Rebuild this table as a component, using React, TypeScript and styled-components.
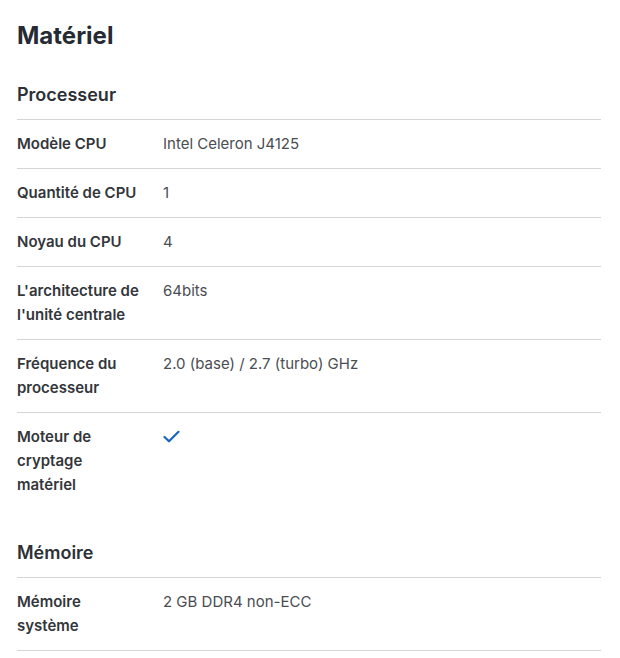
import React from "react";
import styled, { createGlobalStyle } from "styled-components";

const Global = createGlobalStyle`
  html, body { margin: 0; padding: 0; background: #fff; }
  body { font-family: Inter, "Noto Sans", "Liberation Sans", sans-serif; -webkit-font-smoothing: antialiased; }
`;

const Page = styled.div`
  padding: 20px 19px 0 17px;
  width: 584px;
`;

const Title = styled.h1`
  margin: 0 0 31px;
  font-size: 24px;
  line-height: 32px;
  font-weight: 700;
  color: #262b33;
`;

const Section = styled.section`
  & + & { margin-top: 32px; }
`;

const SectionTitle = styled.h2`
  margin: 0;
  padding-bottom: 12px;
  font-size: 18px;
  line-height: 24px;
  font-weight: 600;
  color: #2d3136;
  border-bottom: 1px solid #d4d4d4;
`;

const Row = styled.div<{ $last?: boolean }>`
  display: grid;
  grid-template-columns: 146px 1fr;
  padding: 12px 0;
  border-bottom: ${(p) => (p.$last ? "none" : "1px solid #d4d4d4")};
  font-size: 15px;
  line-height: 24px;
`;

const Label = styled.div`
  font-weight: 600;
  color: #33363a;
  padding-right: 23px;
`;

const Value = styled.div`
  color: #4a4d52;
  font-weight: 400;
`;

const Check = () => (
  <svg width="17" height="14" viewBox="0 0 17 14" style={{ marginTop: 5 }}>
    <path d="M1.5 7 L6 11.3 L15.5 1.8" fill="none" stroke="#1764c4" strokeWidth="2.2" strokeLinecap="round" strokeLinejoin="round" />
  </svg>
);

export default function App() {
  return (
    <Page>
      <Global />
      <Title>Matériel</Title>
      <Section>
        <SectionTitle>Processeur</SectionTitle>
        <Row>
          <Label>Modèle CPU</Label>
          <Value>Intel Celeron J4125</Value>
        </Row>
        <Row>
          <Label>Quantité de CPU</Label>
          <Value>1</Value>
        </Row>
        <Row>
          <Label>Noyau du CPU</Label>
          <Value>4</Value>
        </Row>
        <Row>
          <Label>L'architecture de l'unité centrale</Label>
          <Value>64bits</Value>
        </Row>
        <Row>
          <Label>Fréquence du processeur</Label>
          <Value>2.0 (base) / 2.7 (turbo) GHz</Value>
        </Row>
        <Row $last>
          <Label>Moteur de cryptage matériel</Label>
          <Value><Check /></Value>
        </Row>
      </Section>
      <Section>
        <SectionTitle>Mémoire</SectionTitle>
        <Row>
          <Label>Mémoire système</Label>
          <Value>2 GB DDR4 non-ECC</Value>
        </Row>
      </Section>
    </Page>
  );
}
